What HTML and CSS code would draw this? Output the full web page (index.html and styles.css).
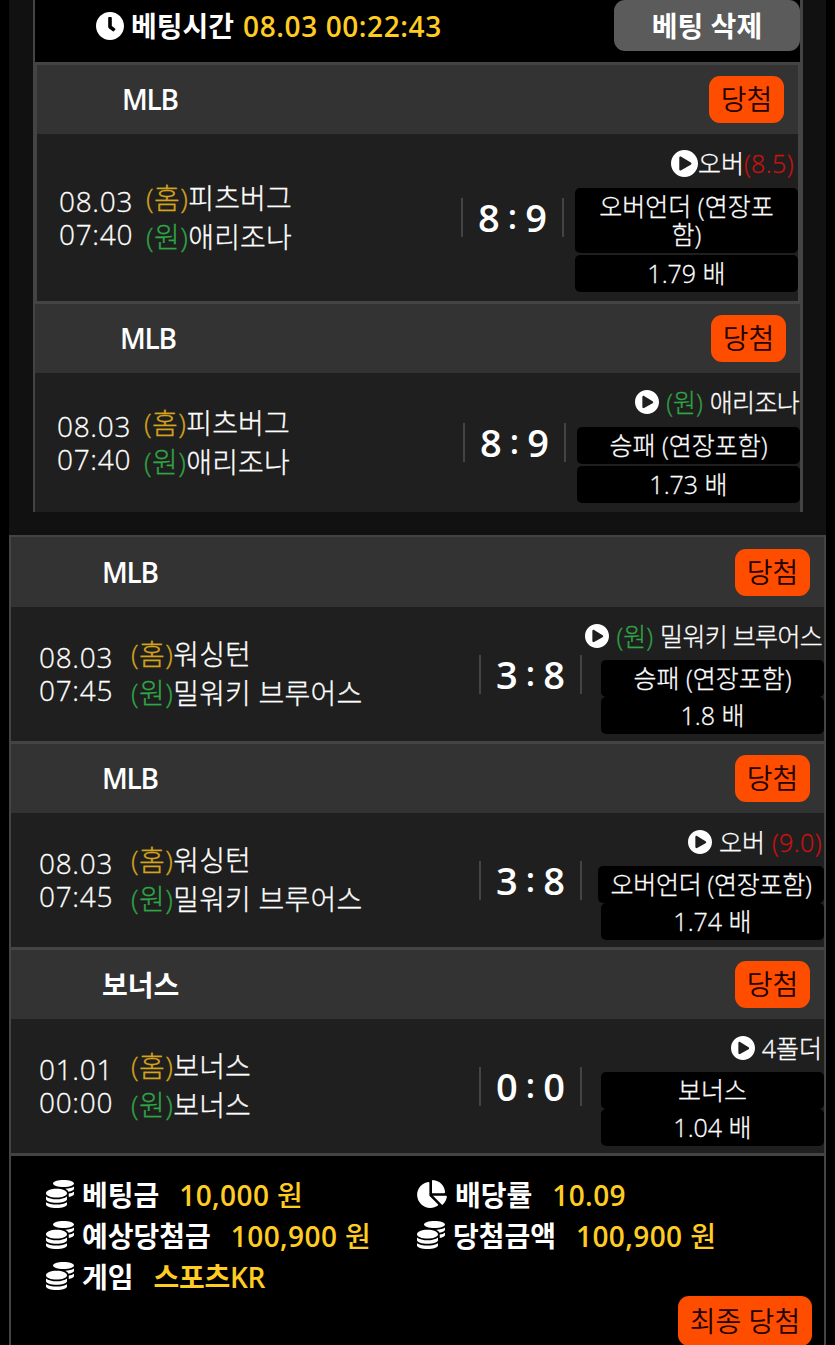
FILE: index.html
```html
<!DOCTYPE html>
<html lang="ko">
<head>
<meta charset="utf-8">
<title>베팅내역</title>
<link rel="stylesheet" href="styles.css">
</head>
<body>
<svg class="defs" aria-hidden="true">
  <symbol id="clock" viewBox="8 8 496 496"><path d="M256,8C119,8,8,119,8,256S119,504,256,504,504,393,504,256,393,8,256,8Zm92.49,313h0l-20,25a16,16,0,0,1-22.49,2.5h0l-67-49.72a40,40,0,0,1-15-31.23V112a16,16,0,0,1,16-16h32a16,16,0,0,1,16,16V256l58,42.5A16,16,0,0,1,348.49,321Z"/></symbol>
  <symbol id="play" viewBox="8 8 496 496"><path d="M256 8C119 8 8 119 8 256s111 248 248 248 248-111 248-248S393 8 256 8zm115.7 272l-176 101c-15.8 8.8-35.7-2.5-35.7-21V152c0-18.4 19.8-29.8 35.7-21l176 107c16.4 9.2 16.4 32.9 0 42z"/></symbol>
  <symbol id="coins" viewBox="0 0 512 512"><path d="M0 405.3V448c0 35.3 86 64 192 64s192-28.7 192-64v-42.7C342.7 434.4 267.2 448 192 448S41.3 434.4 0 405.3zM320 128c106 0 192-28.7 192-64S426 0 320 0 128 28.7 128 64s86 64 192 64zM0 300.4V352c0 35.3 86 64 192 64s192-28.7 192-64v-51.6c-41.3 34-116.9 51.6-192 51.6S41.3 334.4 0 300.4zm416 11c57.3-11.1 96-31.7 96-55.4v-42.7c-23.2 16.4-57.3 27.6-96 34.5v63.6zM192 160C86 160 0 195.8 0 240s86 80 192 80 192-35.8 192-80-86-80-192-80zm219.3 56.3c60-10.8 100.7-32 100.7-56.3v-42.7c-35.5 25.1-96.5 38.6-160.7 41.8 29.5 14.3 51.2 33.5 60 57.2z"/></symbol>
  <symbol id="pie" viewBox="0 0 544 512"><path d="M527.79 288H290.5l158.03 158.03c6.04 6.04 15.98 6.53 22.19.68 38.7-36.46 65.32-85.61 73.13-140.86 1.34-9.46-6.51-17.85-16.06-17.85zm-15.83-64.8C503.72 103.74 408.26 8.28 288.8.04 279.68-.59 272 7.1 272 16.24V240h223.77c9.14 0 16.82-7.68 16.19-16.8zM224 288V50.71c0-9.55-8.39-17.4-17.84-16.06C86.99 51.49-4.1 155.6.14 280.37 4.5 408.51 114.83 513.59 243.03 511.98c50.4-.63 96.97-16.87 135.26-44.03 7.9-5.6 8.42-17.23 1.57-24.08L224 288z"/></symbol>
</svg>
<main class="page">
  <section class="slip">
    <header class="slip-head">
      <svg class="clock"><use href="#clock"/></svg>
      <span class="slip-label">베팅시간</span>
      <span class="slip-time">08.03 00:22:43</span>
      <button class="delete">베팅 삭제</button>
    </header>
    <article class="match boxed">
      <div class="league"><h2 class="latin">MLB</h2><span class="badge">당첨</span></div>
      <div class="body tall">
        <div class="when"><span>08.03</span><span>07:40</span></div>
        <div class="teams"><span><i class="home">(홈)</i>피츠버그</span><span><i class="away">(원)</i>애리조나</span></div>
        <div class="score"><b>8</b><em>:</em><b>9</b></div>
        <div class="bet">
          <div class="pick tight"><svg class="play big"><use href="#play"/></svg><span>오버</span><span class="line">(8.5)</span></div>
          <div class="tag">오버언더 (연장포<br>함)</div>
          <div class="tag">1.79 배</div>
        </div>
      </div>
    </article>
    <article class="match">
      <div class="league"><h2 class="latin">MLB</h2><span class="badge">당첨</span></div>
      <div class="body mid">
        <div class="when"><span>08.03</span><span>07:40</span></div>
        <div class="teams"><span><i class="home">(홈)</i>피츠버그</span><span><i class="away">(원)</i>애리조나</span></div>
        <div class="score"><b>8</b><em>:</em><b>9</b></div>
        <div class="bet">
          <div class="pick"><svg class="play"><use href="#play"/></svg><span class="away">(원)</span><span class="name">애리조나</span></div>
          <div class="tag">승패 (연장포함)</div>
          <div class="tag">1.73 배</div>
        </div>
      </div>
    </article>
  </section>
  <section class="ticket">
    <article class="match">
      <div class="league"><h2 class="latin">MLB</h2><span class="badge">당첨</span></div>
      <div class="body">
        <div class="when"><span>08.03</span><span>07:45</span></div>
        <div class="teams"><span><i class="home">(홈)</i>워싱턴</span><span><i class="away">(원)</i>밀워키 브루어스</span></div>
        <div class="score"><b>3</b><em>:</em><b>8</b></div>
        <div class="bet">
          <div class="pick"><svg class="play"><use href="#play"/></svg><span class="away">(원)</span><span class="name">밀워키 브루어스</span></div>
          <div class="tag">승패 (연장포함)</div>
          <div class="tag">1.8 배</div>
        </div>
      </div>
    </article>
    <article class="match">
      <div class="league"><h2 class="latin">MLB</h2><span class="badge">당첨</span></div>
      <div class="body">
        <div class="when"><span>08.03</span><span>07:45</span></div>
        <div class="teams"><span><i class="home">(홈)</i>워싱턴</span><span><i class="away">(원)</i>밀워키 브루어스</span></div>
        <div class="score"><b>3</b><em>:</em><b>8</b></div>
        <div class="bet">
          <div class="pick"><svg class="play"><use href="#play"/></svg><span>오버</span><span class="line">(9.0)</span></div>
          <div class="tag wide">오버언더 (연장포함)</div>
          <div class="tag">1.74 배</div>
        </div>
      </div>
    </article>
    <article class="match">
      <div class="league"><h2>보너스</h2><span class="badge">당첨</span></div>
      <div class="body">
        <div class="when"><span>01.01</span><span>00:00</span></div>
        <div class="teams"><span><i class="home">(홈)</i>보너스</span><span><i class="away">(원)</i>보너스</span></div>
        <div class="score"><b>0</b><em>:</em><b>0</b></div>
        <div class="bet">
          <div class="pick"><svg class="play"><use href="#play"/></svg><span>4폴더</span></div>
          <div class="tag">보너스</div>
          <div class="tag">1.04 배</div>
        </div>
      </div>
    </article>
    <footer class="summary">
      <dl class="totals">
        <div><svg class="coins"><use href="#coins"/></svg><dt>베팅금</dt><dd>10,000 원</dd></div>
        <div><svg class="pie"><use href="#pie"/></svg><dt>배당률</dt><dd>10.09</dd></div>
        <div><svg class="coins"><use href="#coins"/></svg><dt>예상당첨금</dt><dd>100,900 원</dd></div>
        <div><svg class="coins"><use href="#coins"/></svg><dt>당첨금액</dt><dd>100,900 원</dd></div>
        <div><svg class="coins"><use href="#coins"/></svg><dt>게임</dt><dd class="game">스포츠KR</dd></div>
      </dl>
      <span class="badge final">최종 당첨</span>
    </footer>
  </section>
</main>
</body>
</html>
```
FILE: styles.css
```css
* { box-sizing: border-box; margin: 0; padding: 0; }
html, body { background: #000; }
body {
  font-family: "Open Sans", "Noto Sans CJK KR", sans-serif;
  font-size: 28px;
  font-weight: 300;
  color: #fff;
  white-space: nowrap;
}
svg { fill: #fff; flex: none; display: block; }
.defs { position: absolute; width: 0; height: 0; }
i, em { font-style: normal; }

.page {
  width: 817px;
  height: 1345px;
  margin-left: 9px;
  background: #111;
  overflow: hidden;
}

.slip {
  width: 770px;
  height: 512px;
  margin: 0 24px 23px;
  border: solid #444;
  border-width: 0 2px;
  border-right-width: 3px;
}
.slip-head {
  display: flex;
  align-items: flex-start;
  height: 62px;
  padding-left: 61px;
  background: #000;
  line-height: 53px;
}
.clock { width: 28px; height: 28px; margin: 12px 7px 0 0; }
.slip-label { font-weight: 600; }
.slip-time { margin-left: 9px; font-weight: 550; letter-spacing: .6px; color: #fc2; }
.delete {
  width: 186px;
  height: 51px;
  margin-left: auto;
  border: 0;
  border-radius: 11px;
  background: #5b5b5b;
  color: #fff;
  font: 700 28px/50px "Open Sans", "Noto Sans CJK KR", sans-serif;
}

.match { border-top: 2px solid #444; }
.boxed { border: 2px solid #444; border-width: 3px 2px 0; }
.boxed + .match { border-top-width: 3px; }
.league {
  display: flex;
  align-items: center;
  height: 69px;
  padding: 0 14px 0 85px;
  background: #333;
}
.league h2 { font-size: 28px; font-weight: 600; line-height: 60px; }
.league .latin { padding-bottom: 1px; letter-spacing: -1.3px; }
.badge {
  width: 75px;
  height: 47px;
  margin-left: auto;
  border-radius: 11px;
  background: #ff4d00;
  color: #200;
  font-size: 28px;
  font-weight: 350;
  line-height: 46px;
  text-align: center;
}

.body {
  display: grid;
  grid-template-columns: 87px 1fr 103px 234px;
  align-items: center;
  height: 135px;
  padding-left: 22px;
  background: #1f1f1f;
}
.body.tall { height: 167px; }
.body.mid { height: 139px; }
.when, .teams, .pick, .tag { -webkit-text-stroke: .3px currentColor; }
.when, .teams { display: flex; flex-direction: column; }
.when { letter-spacing: .7px; }
.when span { line-height: 33px; }
.teams span { line-height: 39px; }
.teams i { letter-spacing: .4px; }
.teams { letter-spacing: .2px; }
.home { color: #d6a41c; }
.away { color: #2fa545; }
.line { color: #c11; letter-spacing: .4px; }
.score {
  display: flex;
  justify-content: center;
  align-items: center;
  gap: 9px;
  height: 39px;
  border: solid #444;
  border-width: 0 2px;
  font-size: 38px;
  line-height: 39px;
}
.score b { margin: 0 -1px; font-weight: 600; }
.score em { padding-bottom: 2px; font-weight: 600; font-size: 34px; }

.bet {
  display: flex;
  flex-direction: column;
  align-self: end;
  align-items: flex-end;
  gap: 2px;
  padding-bottom: 9px;
}
.pick {
  display: flex;
  align-items: center;
  gap: 7px;
  height: 36px;
  margin-bottom: 5px;
  padding-right: 1px;
  font-size: 25px;
  line-height: 36px;
}
.pick span { padding-bottom: 1px; }
.pick .name { letter-spacing: -.7px; }
.pick.tight { gap: 0; padding-right: 4px; }
.play { width: 24px; height: 24px; }
.play.big { width: 27px; height: 27px; }
.tag {
  min-width: 223px;
  padding: 4px 0 5px;
  border-radius: 5px;
  background: #000;
  font-size: 25px;
  line-height: 28px;
  text-align: center;
}

.ticket {
  height: 810px;
  border: solid #444;
  border-width: 0 2px;
  background: #000;
}
.ticket .league { padding-left: 91px; height: 70px; }
.ticket .match { height: 206px; }
.ticket .match + .match { height: 206px; border-top-width: 3px; }
.ticket .match + .match .league { height: 69px; }
.ticket .body {
  height: 134px;
  grid-template-columns: 92px 1fr 103px 242px;
  padding-left: 28px;
}
.ticket .bet { gap: 0; padding-bottom: 7px; }
.ticket .pick { margin-bottom: 6px; padding-right: 2px; }
.tag.wide { width: 226px; letter-spacing: -.3px; }
.summary {
  display: flex;
  flex-direction: column;
  height: 192px;
  padding: 17px 12px 0 35px;
  border-top: 3px solid #444;
}
.totals {
  display: grid;
  grid-template-columns: 371px 1fr;
  grid-auto-rows: 41px;
}
.totals div { display: flex; align-items: center; line-height: 41px; }
.totals dt, .totals dd { padding-top: 3px; font-weight: 600; }
.totals dt { margin-left: 8px; }
.totals dd { margin-left: 20px; font-weight: 550; letter-spacing: .4px; color: #fc2; }
.totals .game { font-weight: 600; letter-spacing: -.3px; }
.coins { width: 28px; height: 28px; }
.pie { width: 30px; height: 28px; }
.final { flex: none; width: 134px; height: 50px; line-height: 51px; align-self: flex-end; }
```
